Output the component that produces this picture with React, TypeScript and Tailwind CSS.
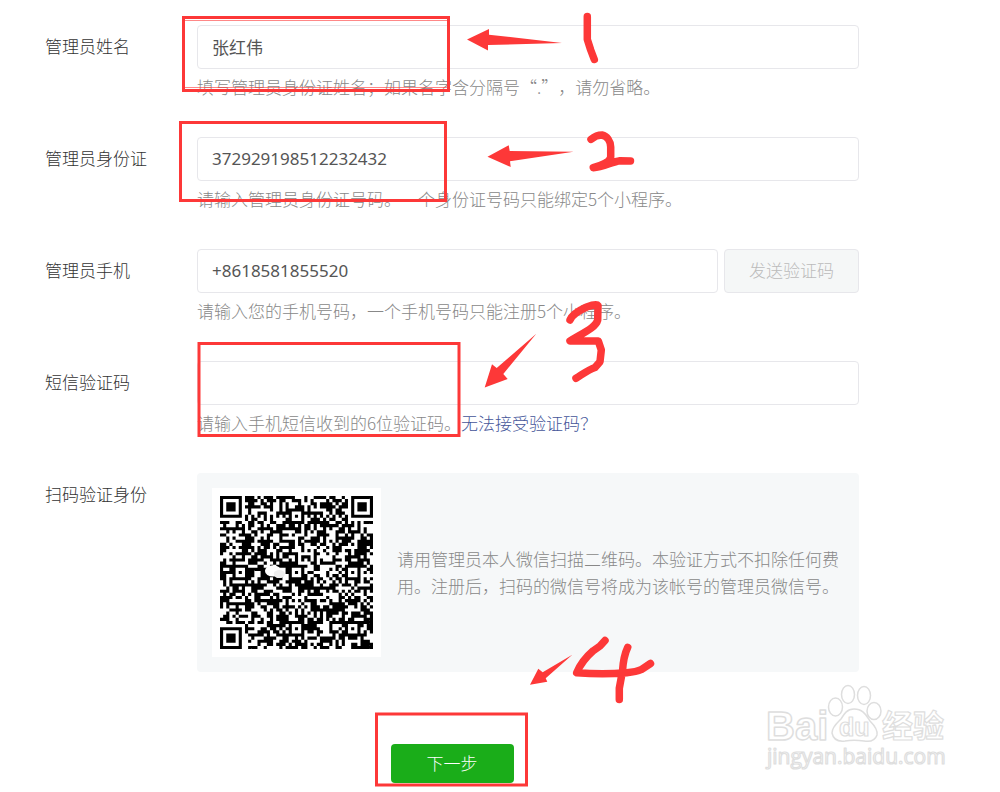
import type { ReactNode } from "react"

const QR_SIZE = 49
const FINDERS = [
  [0, 0],
  [42, 0],
  [0, 42],
]
const ALIGNMENTS = [
  [24, 6],
  [6, 24],
  [24, 24],
  [42, 24],
  [24, 42],
  [42, 42],
]

// One path holding every dark module of the code
function buildQrPath() {
  let seed = 20231
  let d = ""
  for (let y = 0; y < QR_SIZE; y++) {
    for (let x = 0; x < QR_SIZE; x++) {
      seed = (seed * 1103515245 + 12345) % 2147483648
      let dark = seed / 2147483648 < 0.55

      if (x === 6 || y === 6) dark = (x + y) % 2 === 0

      for (const [cx, cy] of ALIGNMENTS) {
        const ring = Math.max(Math.abs(x - cx), Math.abs(y - cy))
        if (ring <= 2) dark = ring !== 1
      }
      for (const [fx, fy] of FINDERS) {
        const ring = Math.max(Math.abs(x - fx - 3), Math.abs(y - fy - 3))
        if (ring <= 4) dark = ring !== 2 && ring !== 4
      }
      if (dark) d += `M${x} ${y}h1v1h-1z`
    }
  }
  return d
}

const qrPath = buildQrPath()

function QrCode() {
  return (
    <div className="size-[169px] shrink-0 bg-white p-2">
      <svg viewBox="0 0 49 49" className="size-full" role="img" aria-label="二维码">
        <path d={qrPath} fill="#000" />
        <ellipse cx="17" cy="24" rx="2.6" ry="1.8" fill="#fff" />
        <ellipse cx="19" cy="25" rx="1.8" ry="1.3" fill="#eee" />
      </svg>
    </div>
  )
}

const inputClass =
  "h-11 w-full min-w-0 rounded-[4px] border border-[#e7e7eb] bg-white px-[14px] pb-0.5 font-['Noto_Sans','Noto_Sans_CJK_SC',sans-serif] text-[17px] font-normal text-[#555] outline-none"

interface RowProps {
  label: string
  id?: string
  hint?: ReactNode
  children: ReactNode
}

function FormRow({ label, id, hint, children }: RowProps) {
  return (
    <div className="flex">
      {id ? (
        <label htmlFor={id} className="w-[152px] shrink-0 leading-[42px]">
          {label}
        </label>
      ) : (
        <span className="w-[152px] shrink-0 leading-[42px]">{label}</span>
      )}
      <div className="min-w-0 flex-1">
        {children}
        {hint && <p className="mt-1.5 leading-6 whitespace-nowrap text-[#888]">{hint}</p>}
      </div>
    </div>
  )
}

// Hand-drawn red frames, arrows and step numbers
function Annotations() {
  return (
    <svg
      width="1000"
      height="792"
      viewBox="0 0 1000 792"
      className="pointer-events-none absolute top-0 left-0"
      aria-hidden="true"
    >
      <g fill="none" stroke="#fd3838" strokeWidth="3">
        <rect x="183.5" y="17.5" width="265" height="73" />
        <path d="M185 20.5H447M185 87.5H447" strokeWidth="1" opacity="0.6" />
        <rect x="180.5" y="122.5" width="265" height="78" />
        <rect x="199" y="343.5" width="260" height="92" />
        <rect x="376.5" y="714" width="150" height="71" />
      </g>
      <g fill="#fd3838">
        <path d="M467 39.5L489 29V34.7L562 43L488 45V50.5Z" />
        <path d="M487.5 156.7L508.7 145.3L509.7 151L573.5 151.7L510 161.3L510.7 167Z" />
        <path d="M484.7 387.5L492 364.3L496.7 368L536.3 333.7L503.3 374L507.7 379Z" />
        <path d="M530 684.7L538.3 668.7L542.7 672.3L572.3 654.7L545.7 678.3L547.3 681.7Z" />
      </g>
      <g fill="none" stroke="#fd3838" strokeWidth="7.5" strokeLinecap="round" strokeLinejoin="round">
        <path d="M587.3 16.5V39.3L590.7 50L594.3 59.5" />
        <path d="M591 139.3C595 136 599 135 602 135C607 136 610.5 141 610.7 147V157C610 162 602 165 593.3 167.7C603 167 612 162 620 160.7L630.5 161" />
        <path d="M570 320C572 315 580 310 586.7 307C592 305 597 304 598 305.5L597.7 320C596 327 585 332 570 341H598.3L601.3 350L600 361.7L595 367.5C588 370 583 374 576 378.3" />
        <path d="M605 640.5L600 646L593.3 650.7C586 657 580 665 576.7 672.7C593 674 612 674 626.7 672.7C634 672 638 671 641.7 669.3L650.5 663.5M627.7 647.3C624 655 623 663 622.5 671L619.3 688.3V699.5" />
      </g>
    </svg>
  )
}

function Watermark() {
  return (
    <svg
      width="200"
      height="100"
      viewBox="0 0 200 100"
      className="pointer-events-none absolute top-[680px] right-[40px]"
      aria-hidden="true"
    >
      <g fill="#fff" stroke="#dedede" strokeWidth="1.5" strokeLinejoin="round">
        <text x="6" y="60" fontSize="40" className="font-['Liberation_Sans',sans-serif] font-bold">
          Bai
        </text>
        <ellipse cx="75.5" cy="27" rx="7" ry="9" />
        <ellipse cx="88" cy="14.5" rx="6.5" ry="9" />
        <ellipse cx="104" cy="15.5" rx="6.5" ry="9" />
        <ellipse cx="114" cy="31" rx="7" ry="8.5" />
        <path d="M94 29C103 29 106 35 110 41C115 46 118 50 117 55C115 61 110 62 104 61C97 60 91 60 85 61C77 62 73 58 72 53C72 47 77 43 81 39C84 34 87 29 94 29Z" />
        <text x="79" y="56" fontSize="25" strokeWidth="1.2" className="font-['Liberation_Sans',sans-serif] font-bold">
          du
        </text>
        <text x="122" y="57" fontSize="31" strokeWidth="1.2" className="font-['Noto_Sans_CJK_SC',sans-serif] font-bold">
          经验
        </text>
        <text x="7" y="84" fontSize="21" strokeWidth="1.2" className="font-['Open_Sans',sans-serif] font-normal">
          jingyan.baidu.com
        </text>
      </g>
    </svg>
  )
}

export default function App() {
  return (
    <main
      lang="zh-CN"
      className="relative min-h-screen bg-white font-['Noto_Sans_CJK_SC',sans-serif] text-[17px] font-light text-[#333] [text-spacing-trim:space-all]"
    >
      <form className="flex flex-col gap-[38px] pt-[25px] pr-[141px] pl-[45px]" onSubmit={(e) => e.preventDefault()}>
        <FormRow
          label="管理员姓名"
          id="name"
          hint="填写管理员身份证姓名；如果名字含分隔号“.”，请勿省略。"
        >
          <input id="name" type="text" defaultValue="张红伟" className={inputClass} />
        </FormRow>

        <FormRow
          label="管理员身份证"
          id="idcard"
          hint="请输入管理员身份证号码。一个身份证号码只能绑定5个小程序。"
        >
          <input id="idcard" type="text" defaultValue="372929198512232432" className={inputClass} />
        </FormRow>

        <FormRow
          label="管理员手机"
          id="phone"
          hint="请输入您的手机号码，一个手机号码只能注册5个小程序。"
        >
          <div className="flex gap-1.5">
            <input id="phone" type="tel" defaultValue="+8618581855520" className={inputClass} />
            <button
              type="button"
              disabled
              className="h-11 w-[135px] shrink-0 rounded-[4px] border border-[#e7e7eb] bg-[#f5f7f7] pb-0.5 text-[#bbb]"
            >
              发送验证码
            </button>
          </div>
        </FormRow>

        <FormRow
          label="短信验证码"
          id="code"
          hint={
            <>
              请输入手机短信收到的6位验证码。
              <a href="#" className="text-[#459] hover:underline">
                无法接受验证码？
              </a>
            </>
          }
        >
          <input id="code" type="text" className={inputClass} />
        </FormRow>

        <FormRow label="扫码验证身份">
          <div className="flex items-center gap-4 rounded-[4px] bg-[#f6f8f9] p-[15px]">
            <QrCode />
            <p className="pb-0.5 leading-[27px] text-[#888]">
              请用管理员本人微信扫描二维码。本验证方式不扣除任何费用。注册后，扫码的微信号将成为该帐号的管理员微信号。
            </p>
          </div>
        </FormRow>

        <div className="mt-[34px] flex justify-center">
          <button type="submit" className="h-[39px] w-[123px] rounded-[4px] bg-[#1aad19] pb-0.5 text-white">
            下一步
          </button>
        </div>
      </form>

      <Watermark />
      <Annotations />
    </main>
  )
}
